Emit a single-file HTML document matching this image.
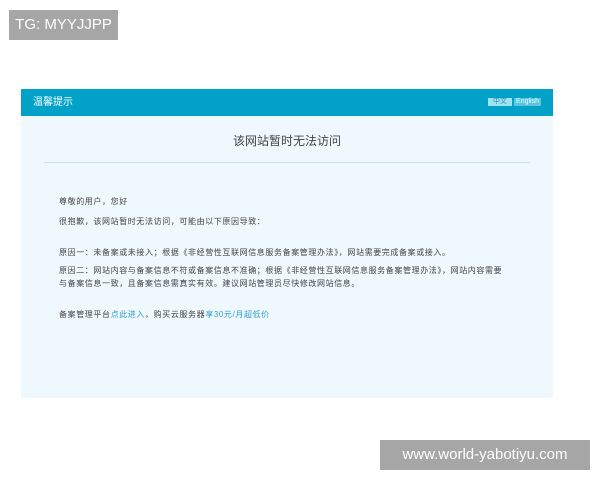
<html><head><style>
body{margin:0;width:600px;height:480px;background:#fff;position:relative;font-family:"Liberation Sans","Noto Sans CJK SC",sans-serif;overflow:hidden}
.tg{position:absolute;left:9px;top:10px;width:109px;height:30px;background:#a6a6a6;color:#fff;font-size:15px;line-height:30px;text-align:center}
.wm{position:absolute;left:380px;top:440px;width:210px;height:30px;background:#a6a6a6;color:#fff;font-size:15px;line-height:30px;text-align:center}
.panel{position:absolute;left:21px;top:89px;width:532px;height:309px;background:#eff8fc}
.hd{height:27px;background:#02a2c8;color:#fff;font-size:10px;line-height:27px;padding-left:12px;position:relative}
.lang{position:absolute;right:12px;top:9px;font-size:7px;line-height:8px}
.lang span{display:inline-block;background:#9fe3f2;color:#1a8fb0;padding:0 5px}
.lang span+span{background:#5cc4dd;color:#dff;margin-left:2px;padding:0 2px}
.t{position:absolute;top:43px;width:100%;text-align:center;font-size:12px;color:#444}
.hr{position:absolute;left:23px;right:23px;top:73px;border-top:1px solid #cfe3ea}
.p{position:absolute;left:38px;font-size:8px;letter-spacing:0.6px;color:#444;white-space:nowrap;line-height:13px}
a{color:#2e9fcf;text-decoration:none}
</style></head><body>
<div class="tg">TG: MYYJJPP</div>
<div class="panel">
<div class="hd">温馨提示<div class="lang"><span>中文</span><span>English</span></div></div>
<div class="t">该网站暂时无法访问</div>
<div class="hr"></div>
<div class="p" style="top:106px">尊敬的用户，您好</div>
<div class="p" style="top:126px">很抱歉，该网站暂时无法访问，可能由以下原因导致：</div>
<div class="p" style="top:157px">原因一：未备案或未接入；根据《非经营性互联网信息服务备案管理办法》，网站需要完成备案或接入。</div>
<div class="p" style="top:175px">原因二：网站内容与备案信息不符或备案信息不准确；根据《非经营性互联网信息服务备案管理办法》，网站内容需要<br>与备案信息一致，且备案信息需真实有效。建议网站管理员尽快修改网站信息。</div>
<div class="p" style="top:219px">备案管理平台<a>点此进入</a>，购买云服务器<a>享30元/月超低价</a></div>
</div>
<div class="wm">www.world-yabotiyu.com</div>
</body></html>
